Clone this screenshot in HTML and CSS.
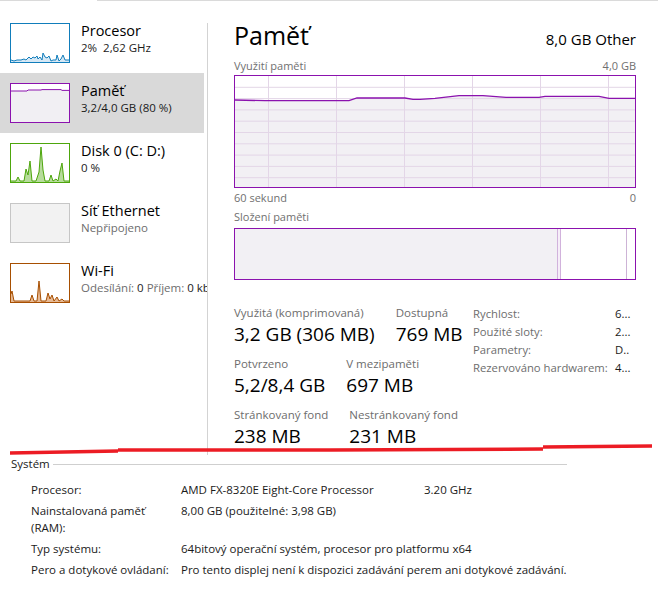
FILE: index.html
```html
<!DOCTYPE html>
<html lang="cs">
<head>
  <meta charset="UTF-8">
  <title>Správce úloh – Paměť</title>
  <link rel="stylesheet" href="styles.css">
</head>
<body>

  <div class="tabs"><span class="t1"></span><span class="gap"></span><span class="t2"></span></div>

  <div class="app">
    <aside class="sidebar">
      <div class="item">
        <div class="thumb cpu">
          <svg viewBox="0 0 58 38">
            <polyline class="fill" points="0,38 0,36 3,37 6,36 10,36 13,35 15,36 18,33 20,35 22,33 24,34 26,32 27,35 29,33 31,36 32,29 34,33 36,34 38,32 40,37 42,36 45,36 46,31 48,37 50,35 52,31 54,36 58,36 58,38"/>
            <polyline class="line" points="0,36 3,37 6,36 10,36 13,35 15,36 18,33 20,35 22,33 24,34 26,32 27,35 29,33 31,36 32,29 34,33 36,34 38,32 40,37 42,36 45,36 46,31 48,37 50,35 52,31 54,36 58,36"/>
          </svg>
        </div>
        <div class="info">
          <div class="name">Procesor</div>
          <div class="sub">2%&nbsp; 2,62 GHz</div>
        </div>
      </div>

      <div class="item active">
        <div class="thumb mem">
          <svg viewBox="0 0 58 38">
            <polyline class="fill" points="0,38 0,7 16,7 17,6 30,6 31,5.6 50,5.6 51,6.4 58,6.4 58,38"/>
            <polyline class="line" points="0,7 16,7 17,6 30,6 31,5.6 50,5.6 51,6.4 58,6.4"/>
          </svg>
        </div>
        <div class="info">
          <div class="name">Paměť</div>
          <div class="sub">3,2/4,0 GB (80 %)</div>
        </div>
      </div>

      <div class="item">
        <div class="thumb disk">
          <svg viewBox="0 0 58 38">
            <polyline class="fill" points="0,38 0,37 5,37 7,33 9,37 13,37 15,25 17,31 19,17 21,37 25,37 28,28 30,3 32,26 34,37 38,37 40,31 42,37 45,35 47,37 49,27 51,19 53,37 58,37 58,38"/>
            <polyline class="line" points="0,37 5,37 7,33 9,37 13,37 15,25 17,31 19,17 21,37 25,37 28,28 30,3 32,26 34,37 38,37 40,31 42,37 45,35 47,37 49,27 51,19 53,37 58,37"/>
          </svg>
        </div>
        <div class="info">
          <div class="name">Disk 0 (C: D:)</div>
          <div class="sub">0 %</div>
        </div>
      </div>

      <div class="item">
        <div class="thumb eth"></div>
        <div class="info">
          <div class="name">Síť Ethernet</div>
          <div class="sub muted">Nepřipojeno</div>
        </div>
      </div>

      <div class="item">
        <div class="thumb wifi">
          <svg viewBox="0 0 58 38">
            <polyline class="fill" points="0,38 0,30 1,27 3,37 10,37 12,37 14,37 19,37 21,31 23,37 26,37 28,17 30,37 35,37 37,29 39,35 41,31 43,37 46,33 48,37 51,35 53,37 58,37 58,38"/>
            <polyline class="line" points="0,30 1,27 3,37 10,37 12,37 14,37 19,37 21,31 23,37 26,37 28,17 30,37 35,37 37,29 39,35 41,31 43,37 46,33 48,37 51,35 53,37 58,37"/>
          </svg>
        </div>
        <div class="info">
          <div class="name">Wi-Fi</div>
          <div class="sub"><span class="muted">Odesílání:</span> 0 <span class="muted">Příjem:</span> 0 kb</div>
        </div>
      </div>
    </aside>

    <main class="panel">
      <div class="head">
        <h1>Paměť</h1>
        <div class="model">8,0 GB Other</div>
      </div>

      <div class="caption"><span>Využití paměti</span><span>4,0 GB</span></div>
      <div class="graph">
        <svg viewBox="0 0 400 111" preserveAspectRatio="none">
          <polygon class="area" points="0,111 0,24 30,24.7 114,24.7 122,22 170,22 178,23.3 185,23.3 200,22.3 224,19.7 248,19.7 271,21.3 304,21.3 310,20.3 364,20.3 374,22.3 400,22.3 400,111"/>
          <g class="grid">
            <line x1="0" y1="11.3" x2="400" y2="11.3"/>
            <line x1="0" y1="22.6" x2="400" y2="22.6"/>
            <line x1="0" y1="33.9" x2="400" y2="33.9"/>
            <line x1="0" y1="45.2" x2="400" y2="45.2"/>
            <line x1="0" y1="56.5" x2="400" y2="56.5"/>
            <line x1="0" y1="67.8" x2="400" y2="67.8"/>
            <line x1="0" y1="79.1" x2="400" y2="79.1"/>
            <line x1="0" y1="90.4" x2="400" y2="90.4"/>
            <line x1="0" y1="101.7" x2="400" y2="101.7"/>
            <line x1="33.5" y1="0" x2="33.5" y2="111"/>
            <line x1="101.5" y1="0" x2="101.5" y2="111"/>
            <line x1="169.5" y1="0" x2="169.5" y2="111"/>
            <line x1="237.5" y1="0" x2="237.5" y2="111"/>
            <line x1="305.5" y1="0" x2="305.5" y2="111"/>
            <line x1="373.5" y1="0" x2="373.5" y2="111"/>
          </g>
          <polyline class="usage" points="0,24 30,24.7 114,24.7 122,22 170,22 178,23.3 185,23.3 200,22.3 224,19.7 248,19.7 271,21.3 304,21.3 310,20.3 364,20.3 374,22.3 400,22.3"/>
        </svg>
      </div>
      <div class="caption axis"><span>60 sekund</span><span>0</span></div>

      <div class="caption comp-title"><span>Složení paměti</span></div>
      <div class="composition">
        <div class="seg used"></div>
        <div class="seg modified"></div>
        <div class="seg standby"></div>
        <div class="seg free"></div>
      </div>

      <div class="stats">
        <div class="stats-left">
          <div class="stat-row">
            <div class="stat"><div class="label">Využitá (komprimovaná)</div><div class="value">3,2 GB (306 MB)</div></div>
            <div class="stat"><div class="label">Dostupná</div><div class="value">769 MB</div></div>
          </div>
          <div class="stat-row">
            <div class="stat"><div class="label">Potvrzeno</div><div class="value">5,2/8,4 GB</div></div>
            <div class="stat"><div class="label">V mezipaměti</div><div class="value">697 MB</div></div>
          </div>
          <div class="stat-row">
            <div class="stat"><div class="label">Stránkovaný fond</div><div class="value">238 MB</div></div>
            <div class="stat"><div class="label">Nestránkovaný fond</div><div class="value">231 MB</div></div>
          </div>
        </div>
        <div class="stats-right">
          <span>Rychlost:</span><span class="cut">6...</span>
          <span>Použité sloty:</span><span class="cut">2...</span>
          <span>Parametry:</span><span class="cut">D..</span>
          <span>Rezervováno hardwarem:</span><span class="cut">4...</span>
        </div>
      </div>
    </main>
  </div>

  <section class="system">
    <div class="sys-title"><span>Systém</span><span class="rule"></span></div>
    <div class="sys-grid">
      <div class="k">Procesor:</div>
      <div class="v">AMD FX-8320E Eight-Core Processor</div>
      <div class="v">3.20 GHz</div>

      <div class="k">Nainstalovaná paměť (RAM):</div>
      <div class="v wide">8,00 GB (použitelné: 3,98 GB)</div>

      <div class="k">Typ systému:</div>
      <div class="v wide">64bitový operační systém, procesor pro platformu x64</div>

      <div class="k">Pero a dotykové ovládaní:</div>
      <div class="v wide">Pro tento displej není k dispozici zadávání perem ani dotykové zadávání.</div>
    </div>
  </section>

  <!-- red marker stroke drawn over the screenshot -->
  <svg class="scribble" viewBox="0 0 658 592">
    <polyline points="10,453 118,451"/>
    <polyline points="118,450 330,450"/>
    <polyline points="330,450 543,449"/>
    <polyline points="543,447 652,446"/>
  </svg>

</body>
</html>
```

FILE: styles.css
```css
body {
  margin: 0;
  width: 658px;
  height: 592px;
  overflow: hidden;
  position: relative;
  background: #fff;
  color: #000;
  font-family: "Open Sans", "Noto Sans", sans-serif;
}

/* top tab strip */
.tabs {
  display: flex;
  height: 1px;
}
.tabs span {
  background: #dadada;
}
.tabs .t1 { width: 50px; }
.tabs .gap { width: 47px; background: none; }
.tabs .t2 { flex: 1; }

.app {
  display: flex;
  height: 454px;
}

/* left list */
.sidebar {
  width: 207px;
  flex: none;
  padding-top: 12px;
  overflow: hidden;
}
.item {
  display: flex;
  gap: 11px;
  width: 204px;
  height: 60px;
  box-sizing: border-box;
  padding: 10px 0 0 10px;
  white-space: nowrap;
}
.item.active {
  background: #d9d9d9;
}
.thumb {
  width: 60px;
  height: 40px;
  flex: none;
  box-sizing: border-box;
  border: 1px solid;
  background: #fff;
}
.thumb svg {
  display: block;
  width: 58px;
  height: 38px;
}
.thumb .line {
  fill: none;
  stroke-width: 1;
}
.cpu { border-color: #117dbb; }
.cpu .line { stroke: #117dbb; }
.cpu .fill { fill: #d6e8f5; }
.mem { border-color: #8b12ae; }
.mem .line { stroke: #8b12ae; }
.mem .fill { fill: #f1eff3; }
.disk { border-color: #4da60c; }
.disk .line { stroke: #4da60c; }
.disk .fill { fill: #b7dc9c; }
.eth { border-color: #c6c6c6; background: #f2f2f2; }
.wifi { border-color: #a74f01; }
.wifi .line { stroke: #a74f01; }
.wifi .fill { fill: #e6b994; }

.info {
  margin-top: -1px;
}
.name {
  font-size: 14.5px;
  line-height: 17px;
}
.sub {
  font-size: 11.5px;
  line-height: 16px;
  margin-top: 1px;
  color: #1a1a1a;
}
.muted {
  color: #6d6d6d;
}

/* right detail panel */
.panel {
  flex: 1;
  margin-top: 22px;
  border-left: 1px solid #d3d3d3;
  padding: 0 22px 0 26px;
}
.head {
  display: flex;
  justify-content: space-between;
  align-items: baseline;
  height: 34px;
  margin-top: -5px;
}
.head h1 {
  margin: 0;
  font-size: 25px;
  font-weight: normal;
  line-height: 34px;
}
.model {
  font-size: 15px;
}
.caption {
  display: flex;
  justify-content: space-between;
  font-size: 11px;
  line-height: 15px;
  color: #707070;
  margin-top: 6px;
}
.graph {
  height: 113px;
  box-sizing: border-box;
  border: 1px solid #8b12ae;
  margin-top: 2px;
  background: #fff;
}
.graph svg {
  display: block;
  width: 100%;
  height: 100%;
}
.graph .area { fill: #f2f0f4; }
.graph .grid line {
  stroke: #e3d6e7;
  stroke-width: 1;
}
.graph .usage {
  fill: none;
  stroke: #8b12ae;
  stroke-width: 1.3;
}
.axis {
  margin-top: 2px;
}
.comp-title {
  margin-top: 4px;
}
.composition {
  display: flex;
  height: 52px;
  box-sizing: border-box;
  border: 1px solid #8b12ae;
  margin-top: 4px;
}
.seg {
  height: 100%;
  box-sizing: border-box;
}
.seg.used { width: 323px; background: #f2f0f4; border-right: 1px solid #d1b2dc; }
.seg.modified { width: 3px; background: #f6eef8; border-right: 1px solid #d1b2dc; }
.seg.standby { width: 66px; border-right: 1px solid #cdb3d6; }
.seg.free { flex: 1; }

/* numbers under the graphs */
.stats {
  display: grid;
  grid-template-columns: 239px 1fr;
  margin-top: 25px;
}
.stat-row {
  display: flex;
  gap: 21px;
  margin-bottom: 8px;
}
.label {
  font-size: 11.5px;
  line-height: 16px;
  color: #6d6d6d;
}
.value {
  font-size: 19px;
  line-height: 27px;
  color: #000;
}
.stats-right {
  display: grid;
  grid-template-columns: 142px 1fr;
  font-size: 11.3px;
  line-height: 18px;
  color: #6d6d6d;
  align-content: start;
}
.stats-right span {
  white-space: nowrap;
}
.stats-right .cut {
  color: #1a1a1a;
}

/* system info */
.system {
  font-size: 11.5px;
  color: #1a1a1a;
}
.sys-title {
  display: flex;
  align-items: center;
  gap: 3px;
  padding-left: 11px;
  width: 556px;
  line-height: 17px;
}
.sys-title .rule {
  flex: 1;
  height: 1px;
  background: #cfcfcf;
  margin-top: 2px;
}
.sys-grid {
  display: grid;
  grid-template-columns: 150px 243px auto;
  row-gap: 4px;
  padding-left: 31px;
  margin-top: 9px;
  line-height: 17px;
}
.sys-grid .k {
  padding-right: 4px;
}
.sys-grid .wide {
  grid-column: 2 / 4;
}

.scribble {
  position: absolute;
  left: 0;
  top: 0;
  width: 658px;
  height: 592px;
  pointer-events: none;
}
.scribble polyline {
  fill: none;
  stroke: #ec1c24;
  stroke-width: 3.5;
}
```
